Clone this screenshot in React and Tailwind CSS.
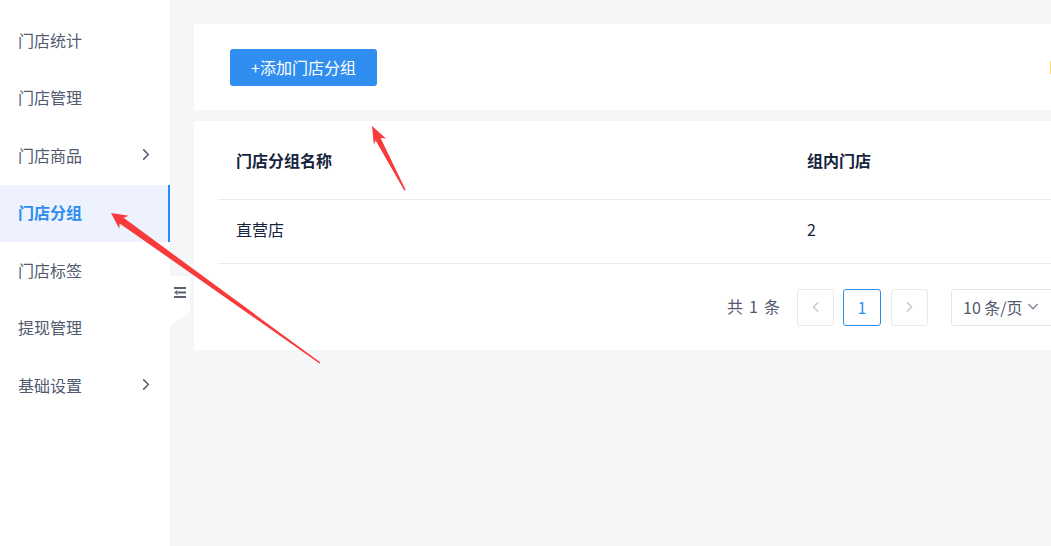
import React from 'react';

const menu = [
  { name: '门店统计' },
  { name: '门店管理' },
  { name: '门店商品', sub: true },
  { name: '门店分组', active: true },
  { name: '门店标签' },
  { name: '提现管理' },
  { name: '基础设置', sub: true },
];

const Chevron = ({ dir = 'right', className }) => {
  const d = {
    right: 'M4 2l5 5-5 5',
    left: 'M9 2L4 7l5 5',
    down: 'M2 4l5 5 5-5',
  }[dir];
  return (
    <svg viewBox="0 0 14 14" className={className} fill="none" stroke="currentColor" strokeWidth="1.6" strokeLinecap="round" strokeLinejoin="round">
      <path d={d} />
    </svg>
  );
};

const App = () => {
  return (
    <div
      className="relative flex w-[1051px] h-[546px] overflow-hidden bg-[#f5f6f8] text-[#515a6e]"
      style={{ fontFamily: '"Noto Sans CJK SC", "Liberation Sans", sans-serif' }}
    >
      <aside className="relative w-[170px] shrink-0 bg-white pt-[12px]">
        {menu.map(m => (
          <div
            key={m.name}
            className={
              m.active
                ? 'h-[57.5px] flex items-center justify-between pl-[18px] pr-[15px] pb-[2px] bg-[#eef2fe] border-r-2 border-[#2d8cf0] text-[#2d8cf0] font-bold text-[16px]'
                : 'h-[57.5px] flex items-center justify-between pl-[18px] pr-[17px] pb-[2px] text-[16px]'
            }
          >
            <span>{m.name}</span>
            {m.sub && <Chevron dir="right" className="w-[13px] h-[13px] text-[#515a6e]" />}
          </div>
        ))}

        {/* collapse handle */}
        <div className="absolute left-[170px] top-[276px] w-[20px] h-[50px] bg-white shadow-[2px_0_4px_rgba(0,0,0,0.06)] [clip-path:polygon(0_0,100%_0,100%_72%,0_100%)] flex justify-center pt-[11px]">
          <svg viewBox="0 0 12 11" className="w-[12px] h-[11px]" fill="#5c6170">
            <rect x="0" y="0" width="12" height="2" />
            <rect x="4" y="4.5" width="8" height="2" />
            <path d="M0 5.5l3.5-2.6v5.2z" />
            <rect x="0" y="9" width="12" height="2" />
          </svg>
        </div>
      </aside>

      <main className="flex flex-col gap-[11px] pt-6 pl-6">
        <div className="w-[891px] h-[86px] bg-white flex items-center pl-9">
          <button className="shrink-0 h-[37px] w-[147px] rounded-[3px] bg-[#2f8ef0] text-white text-[16px]">+添加门店分组</button>
          <div className="shrink-0 ml-[673px] w-[20px] h-[13px] border-l border-[#ffd670]" />
        </div>

        <div className="w-[891px] bg-white px-6">
          <div className="flex h-[79px] items-center pb-[1px] border-b border-[#e8eaec] text-[#17233d] font-bold text-[16px]">
            <div className="w-[571px] pl-[18px]">门店分组名称</div>
            <div className="pl-[18px]">组内门店</div>
          </div>
          <div className="flex h-[64px] items-center pb-[5px] border-b border-[#e8eaec] text-[#17233d] text-[16px]">
            <div className="w-[571px] pl-[18px]">直营店</div>
            <div className="pl-[18px]">2</div>
          </div>
          <div className="flex h-[86px] items-center justify-end text-[16px]">
            <span className="mr-[17px] flex gap-[6px] text-[#515a6e] pb-[3px]">
              <span>共</span>
              <span>1</span>
              <span>条</span>
            </span>
            <div className="w-[37px] h-[37px] rounded-[3px] border border-[#e8eaec] flex items-center justify-center text-[#c5c8ce]">
              <Chevron dir="left" className="w-[12px] h-[12px]" />
            </div>
            <div className="ml-[9px] w-[38px] h-[37px] rounded-[3px] border border-[#2d8cf0] flex items-center justify-center text-[#2d8cf0]">1</div>
            <div className="ml-[10px] w-[37px] h-[37px] rounded-[3px] border border-[#e8eaec] flex items-center justify-center text-[#c5c8ce]">
              <Chevron dir="right" className="w-[12px] h-[12px]" />
            </div>
            <div className="ml-[23px] w-[110px] h-[37px] rounded-[3px] border border-[#e3e5e8] flex items-center pl-[11px] gap-[4px] text-[#515a6e]">
              <span>10 条/页</span>
              <Chevron dir="down" className="w-[12px] h-[12px] text-[#808695]" />
            </div>
          </div>
        </div>
      </main>

      {/* annotation arrows */}
      <svg className="absolute inset-0 pointer-events-none" width="1051" height="546" viewBox="0 0 1051 546">
        <polygon
          fill="#f83a3a"
          points="111,213 128.7,215.8 123.6,217.8 320.5,362.5 319.5,363.5 119.6,223.4 119.3,228.8"
        />
        <polygon
          fill="#f83a3a"
          points="372,126 386,138.5 380.6,138 405.7,190 404.3,190.5 375.7,140.5 373.8,144.5"
        />
      </svg>
    </div>
  );
};

export default App;
